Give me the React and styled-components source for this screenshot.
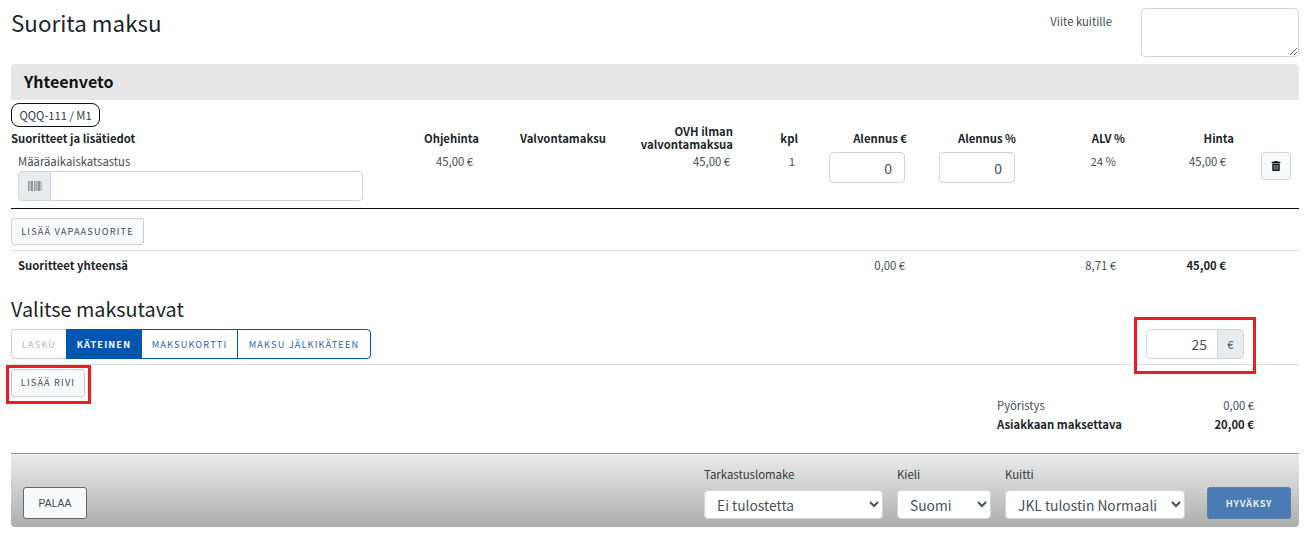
import React from 'react'
import styled, { createGlobalStyle } from 'styled-components'
import { FaTrashAlt } from 'react-icons/fa'

const COLUMNS = '389px 79px 127px 127px 65px 109px 109px 109px 109px 65px'
const BARCODE_BARS = [0, 1.5, 3, 4, 6, 7.5, 8.5, 10, 11, 12.5]

export default function App () {
  return (
    <Page>
      <GlobalStyle />
      <TopRow>
        <Title>Suorita maksu</Title>
        <ReceiptRef>
          <RefLabel>Viite kuitille</RefLabel>
          <RefArea />
        </ReceiptRef>
      </TopRow>
      <Band>Yhteenveto</Band>
      <Plate>QQQ-111 / M1</Plate>
      <HeadRow>
        <Head $left>Suoritteet ja lisätiedot</Head>
        <Head>Ohjehinta</Head>
        <Head>Valvontamaksu</Head>
        <Head>OVH ilman<br />valvontamaksua</Head>
        <Head>kpl</Head>
        <Head>Alennus €</Head>
        <Head>Alennus %</Head>
        <Head>ALV %</Head>
        <Head>Hinta</Head>
      </HeadRow>
      <ItemRow>
        <ItemCell>
          <ItemName>Määräaikaiskatsastus</ItemName>
          <BarcodeGroup>
            <BarcodeAddon>
              <svg width='14' height='10' viewBox='0 0 14 10'>
                {BARCODE_BARS.map(x => (
                  <rect key={x} x={x} y='0' width='1' height='10' fill='#8f949b' />
                ))}
              </svg>
            </BarcodeAddon>
            <BarcodeInput />
          </BarcodeGroup>
        </ItemCell>
        <Value $inset={6}>45,00 €</Value>
        <Value />
        <Value $inset={3}>45,00 €</Value>
        <Value $inset={3} $blue>1</Value>
        <InputCell $inset={2}><DiscountInput defaultValue='0' /></InputCell>
        <InputCell $inset={1}><DiscountInput defaultValue='0' /></InputCell>
        <Value $inset={9}>24 %</Value>
        <Value $inset={8}>45,00 €</Value>
        <TrashCell>
          <TrashButton><FaTrashAlt size={10} color='#111' /></TrashButton>
        </TrashCell>
      </ItemRow>
      <LightButton $wide>Lisää vapaasuorite</LightButton>
      <TotalRow>
        <TotalLabel>Suoritteet yhteensä</TotalLabel>
        <Value />
        <Value />
        <Value />
        <Value />
        <Value $inset={2}>0,00 €</Value>
        <Value />
        <Value $inset={9}>8,71 €</Value>
        <Value $inset={8} $bold>45,00 €</Value>
      </TotalRow>
      <SubTitle>Valitse maksutavat</SubTitle>
      <PayRow>
        <MethodGroup>
          <Method $width={56} $disabled>Lasku</Method>
          <Method $width={76} $active>Käteinen</Method>
          <Method $width={97}>Maksukortti</Method>
          <Method $width={134}>Maksu jälkikäteen</Method>
        </MethodGroup>
        <AmountGroup>
          <AmountInput defaultValue='25' />
          <AmountAddon>€</AmountAddon>
          <AmountMark />
        </AmountGroup>
      </PayRow>
      <AddRow>
        <AddWrap>
          <LightButton>Lisää rivi</LightButton>
          <AddMark />
        </AddWrap>
      </AddRow>
      <Summary>
        <SummaryLine>
          <span>Pyöristys</span>
          <span>0,00 €</span>
        </SummaryLine>
        <SummaryLine $bold>
          <span>Asiakkaan maksettava</span>
          <span>20,00 €</span>
        </SummaryLine>
      </Summary>
      <Footer>
        <BackButton>Palaa</BackButton>
        <FooterFields>
          <Field>
            <FieldLabel>Tarkastuslomake</FieldLabel>
            <FooterSelect $width={179}><option>Ei tulostetta</option></FooterSelect>
          </Field>
          <Field>
            <FieldLabel>Kieli</FieldLabel>
            <FooterSelect $width={94}><option>Suomi</option></FooterSelect>
          </Field>
          <Field>
            <FieldLabel>Kuitti</FieldLabel>
            <FooterSelect $width={180}><option>JKL tulostin Normaali</option></FooterSelect>
          </Field>
          <AcceptButton>Hyväksy</AcceptButton>
        </FooterFields>
      </Footer>
    </Page>
  )
}

const GlobalStyle = createGlobalStyle`
  body {
    margin: 0;
    background: #fff;
    color: #212529;
    font-family: "Noto Sans CJK SC", "Noto Sans", sans-serif;
    font-size: 11.3px;
  }
  * {
    box-sizing: border-box;
  }
`

const Page = styled.div`
  width: 1311px;
  height: 535px;
  overflow: hidden;
  padding: 8px 12px 0 11px;
`

const TopRow = styled.div`
  display: flex;
  justify-content: space-between;
  height: 56px;
`

const Title = styled.h1`
  margin: 0;
  font-size: 22.4px;
  font-weight: 400;
  line-height: 28px;
`

const ReceiptRef = styled.div`
  display: flex;
  gap: 29px;
`

const RefLabel = styled.label`
  font-size: 11.3px;
  line-height: 26px;
  color: #444b52;
`

const RefArea = styled.textarea`
  display: block;
  width: 158px;
  height: 49px;
  border: 1px solid #ced4da;
  border-radius: 4px;
  background: #fff;
`

const Band = styled.div`
  height: 36px;
  padding-left: 13px;
  background: #e6e6e6;
  border-radius: 4px 4px 0 0;
  color: #111;
  font-size: 16px;
  font-weight: 700;
  line-height: 34px;
`

const Plate = styled.div`
  display: inline-block;
  margin-top: 3px;
  height: 24px;
  padding: 0 7.5px;
  border: 1px solid #111;
  border-radius: 8px;
  font-size: 11.2px;
  line-height: 23px;
  color: #333a40;
  vertical-align: top;
`

const HeadRow = styled.div`
  display: grid;
  grid-template-columns: ${COLUMNS};
  align-items: center;
  height: 25px;
  margin: -2px 0 2px;
`

const Head = styled.div`
  font-size: 11.3px;
  font-weight: 700;
  line-height: 13px;
  color: #212529;
  text-align: ${p => (p.$left ? 'left' : 'right')};
`

const ItemRow = styled.div`
  display: grid;
  grid-template-columns: ${COLUMNS};
  height: 57px;
  border-bottom: 1px solid #111;
`

const ItemCell = styled.div`
  padding-left: 7px;
`

const ItemName = styled.div`
  font-size: 11.3px;
  line-height: 19px;
  color: #444b52;
`

const BarcodeGroup = styled.div`
  display: flex;
  width: 345px;
  height: 30px;
`

const BarcodeAddon = styled.div`
  display: flex;
  align-items: center;
  justify-content: center;
  width: 33px;
  background: #e9ecef;
  border: 1px solid #ced4da;
  border-radius: 4px 0 0 4px;
`

const BarcodeInput = styled.input`
  flex: 1;
  min-width: 0;
  margin-left: -1px;
  border: 1px solid #ced4da;
  border-radius: 0 4px 4px 0;
`

const Value = styled.div`
  padding-right: ${p => p.$inset || 0}px;
  font-size: 11.3px;
  font-weight: ${p => (p.$bold ? 700 : 400)};
  line-height: 18px;
  text-align: right;
  color: ${p => (p.$bold ? '#212529' : p.$blue ? '#34506e' : '#444b52')};
`

const InputCell = styled.div`
  display: flex;
  justify-content: flex-end;
  padding-right: ${p => p.$inset}px;
`

const DiscountInput = styled.input`
  width: 76px;
  height: 31px;
  padding: 0 12px;
  border: 1px solid #ced4da;
  border-radius: 4px;
  font: inherit;
  font-size: 14px;
  color: #495057;
  text-align: right;
`

const TrashCell = styled.div`
  display: flex;
  justify-content: flex-end;
  padding-right: 8px;
`

const TrashButton = styled.button`
  display: flex;
  align-items: center;
  justify-content: center;
  width: 30px;
  height: 28px;
  padding: 0;
  background: #f8f9fa;
  border: 1px solid #ced4da;
  border-radius: 3px;
`

const LightButton = styled.button`
  display: block;
  margin-top: ${p => (p.$wide ? '9px' : '0')};
  height: ${p => (p.$wide ? '27px' : '28px')};
  width: ${p => (p.$wide ? '133px' : '74px')};
  padding: 0 0 2px;
  background: #f8f9fa;
  border: 1px solid #ccc;
  border-radius: 3px;
  font-family: inherit;
  font-size: 9.2px;
  letter-spacing: 1.15px;
  text-transform: uppercase;
  color: #444b52;
`

const TotalRow = styled.div`
  display: grid;
  grid-template-columns: ${COLUMNS};
  align-items: center;
  margin-top: 5px;
  height: 31px;
  padding-bottom: 2px;
  border-top: 1px solid #ddd;
`

const TotalLabel = styled.div`
  padding-left: 7px;
  font-size: 11.3px;
  font-weight: 700;
`

const SubTitle = styled.h2`
  margin: 13px 0 0;
  font-size: 19.8px;
  font-weight: 400;
  line-height: 30px;
`

const PayRow = styled.div`
  display: flex;
  justify-content: space-between;
  align-items: flex-start;
  margin-top: 5px;
  height: 36px;
  padding-right: 55px;
  border-bottom: 1px solid #ddd;
`

const MethodGroup = styled.div`
  display: flex;
  height: 30px;
`

const Method = styled.button`
  width: ${p => p.$width}px;
  height: 30px;
  padding: 0;
  margin-left: -1px;
  background: ${p => (p.$active ? '#0056ad' : '#fff')};
  border: 1px solid ${p => (p.$disabled ? '#ccc' : '#0056ad')};
  font-family: inherit;
  font-size: 9.2px;
  font-weight: ${p => (p.$active ? 700 : 400)};
  letter-spacing: 1.15px;
  text-transform: uppercase;
  color: ${p => (p.$active ? '#fff' : p.$disabled ? '#b5b5b5' : '#2b63a8')};

  &:first-child {
    margin-left: 0;
    border-radius: 4px 0 0 4px;
  }
  &:last-child {
    border-radius: 0 4px 4px 0;
  }
`

const AmountGroup = styled.div`
  position: relative;
  display: flex;
  width: 98px;
  height: 30px;
`

const AmountInput = styled.input`
  width: 72px;
  padding: 0 10px;
  border: 1px solid #ced4da;
  border-radius: 4px 0 0 4px;
  font: inherit;
  font-size: 14px;
  color: #495057;
  text-align: right;
`

const AmountAddon = styled.div`
  flex: 1;
  margin-left: -1px;
  background: #e9ecef;
  border: 1px solid #ced4da;
  border-radius: 0 4px 4px 0;
  font-size: 11.3px;
  line-height: 28px;
  text-align: center;
  color: #495057;
`

const AmountMark = styled.div`
  position: absolute;
  inset: -12px -12px -15px -12px;
  border: 3px solid #ed1c24;
  pointer-events: none;
`

const AddRow = styled.div`
  padding-top: 4px;
  height: 31px;
`

const AddWrap = styled.div`
  position: relative;
  width: 74px;
`

const AddMark = styled.div`
  position: absolute;
  inset: -4px -6px -7px -5px;
  border: 3px solid #ed1c24;
  pointer-events: none;
`

const Summary = styled.div`
  width: 257px;
  margin-left: auto;
  margin-right: 45px;
  height: 57px;
`

const SummaryLine = styled.div`
  display: flex;
  justify-content: space-between;
  font-size: 11.3px;
  font-weight: ${p => (p.$bold ? 700 : 400)};
  line-height: 19px;
  color: ${p => (p.$bold ? '#212529' : '#444b52')};
`

const Footer = styled.div`
  display: flex;
  justify-content: space-between;
  align-items: flex-end;
  height: 74px;
  padding: 0 8px 8px 12px;
  background: linear-gradient(#ebebeb, #adadad);
  border-top: 1px solid #999;
  border-radius: 0 0 4px 4px;
`

const BackButton = styled.button`
  width: 64px;
  height: 32px;
  padding: 0;
  background: #f8f9fa;
  border: 1px solid #666;
  border-radius: 3px;
  font-family: "Liberation Sans", Arial, sans-serif;
  font-size: 10.2px;
  letter-spacing: 0.2px;
  text-transform: uppercase;
  color: #444b52;
`

const FooterFields = styled.div`
  display: flex;
  align-items: flex-end;
  gap: 14px;
`

const Field = styled.div`
  display: flex;
  flex-direction: column;
`

const FieldLabel = styled.label`
  font-size: 11.4px;
  line-height: 18px;
  margin-bottom: 7px;
  color: #333a40;
`

const FooterSelect = styled.select`
  width: ${p => p.$width}px;
  height: 29px;
  padding: 0 8px;
  background: #fff;
  border: 1px solid #ced4da;
  border-radius: 4px;
  font-family: inherit;
  font-size: 13.8px;
  color: #495057;
`

const AcceptButton = styled.button`
  width: 84px;
  height: 32px;
  margin-left: 8px;
  padding: 0 0 1px;
  background: #4a7cb3;
  border: 1px solid #5a7fa8;
  border-radius: 3px;
  font-family: inherit;
  font-size: 9.4px;
  font-weight: 700;
  letter-spacing: 0.7px;
  text-transform: uppercase;
  color: #e6edf5;
`
